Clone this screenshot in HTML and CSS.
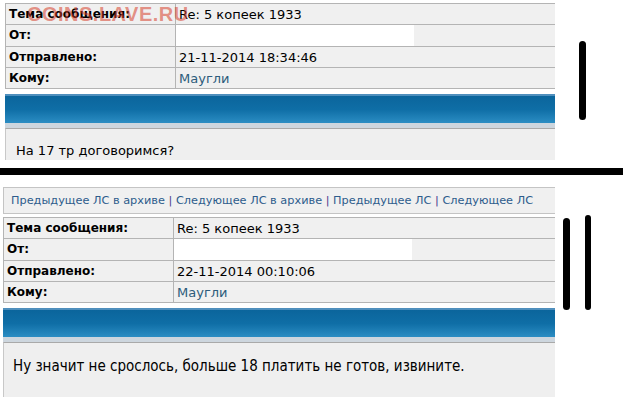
FILE: index.html
```html
<!DOCTYPE html>
<html lang="ru">
<head>
  <meta charset="UTF-8">
  <title>Личные сообщения</title>
  <link rel="stylesheet" href="styles.css">
</head>
<body>

  <div class="shot">

    <section class="pm pm-top">
      <table class="hdr">
        <tr><th>Тема сообщения:</th><td>Re: 5 копеек 1933</td></tr>
        <tr><th>От:</th><td class="hidden"><span class="blank"></span></td></tr>
        <tr><th>Отправлено:</th><td>21-11-2014 18:34:46</td></tr>
        <tr><th>Кому:</th><td><a href="#">Маугли</a></td></tr>
      </table>
      <div class="bar"></div>
      <div class="msg">На 17 тр договоримся?</div>
      <span class="wm">COINS.LAVE.RU</span>
    </section>

    <div class="divider"></div>

    <section class="pm pm-bottom">
      <div class="nav">
        <a href="#">Предыдущее ЛС в архиве</a> | <a href="#">Следующее ЛС в архиве</a> | <a href="#">Предыдущее ЛС</a> | <a href="#">Следующее ЛС</a>
      </div>
      <table class="hdr">
        <tr><th>Тема сообщения:</th><td>Re: 5 копеек 1933</td></tr>
        <tr><th>От:</th><td class="hidden"><span class="blank"></span></td></tr>
        <tr><th>Отправлено:</th><td>22-11-2014 00:10:06</td></tr>
        <tr><th>Кому:</th><td><a href="#">Маугли</a></td></tr>
      </table>
      <div class="bar"></div>
      <div class="msg msg-wide">Ну значит не срослось, больше 18 платить не готов, извините.</div>
    </section>

    <!-- пометки маркером -->
    <span class="mark mark-1"></span>
    <span class="mark mark-2a"></span>
    <span class="mark mark-2b"></span>
  </div>

</body>
</html>
```

FILE: styles.css
```css
body {
  margin: 0;
  background-color: #fff;
  font-family: "DejaVu Sans", Verdana, sans-serif;
  color: #000;
}

.shot {
  position: relative;
  width: 623px;
  height: 397px;
  overflow: hidden;
}

.pm {
  position: relative;
  width: 550px;
  background-color: #fff;
}

.pm-top {
  margin: 3px 0 0 5px;
  height: 157px;
  overflow: hidden;
}

.pm-bottom {
  margin: 12px 0 0 3px;
  width: 552px;
}

.hdr {
  width: 100%;
  border-collapse: collapse;
  background-color: #f0f0f0;
}

.hdr th,
.hdr td {
  height: 21px;
  box-sizing: border-box;
  padding: 0 3px;
  line-height: 19px;
  border: 1px solid #b4b4b4;
  border-right: none;
  text-align: left;
  white-space: nowrap;
  font-size: 13px;
}

.hdr th {
  width: 170px;
  font-size: 12px;
  font-weight: bold;
}

.hdr td.hidden {
  padding: 0;
}

.blank {
  display: block;
  width: 238px;
  height: 21px;
  background-color: #fff;
}

.hdr a {
  color: #2d5c7c;
  text-decoration: none;
}

.bar {
  height: 27px;
  margin-top: 5px;
  border-top: 2px solid #4f8fbd;
  background: linear-gradient(#0b659c, #0f6ea6 50%, #2b8dc3);
  border-bottom: 5px solid #cdd6de;
}

.msg {
  border-top: 1px solid #a9a9a9;
  border-left: 1px solid #c8c8c8;
  background-color: #efefef;
  padding: 14px 10px 0;
  height: 40px;
  font-size: 13px;
}

.pm-bottom .msg {
  height: 60px;
  padding: 14px 9px 0;
}

.msg-wide {
  font-family: "DejaVu Sans Condensed", "DejaVu Sans", sans-serif;
  font-stretch: condensed;
  font-size: 15px;
}

.wm {
  position: absolute;
  left: 22px;
  top: 0;
  font-family: "Liberation Sans", Arial, sans-serif;
  font-size: 20px;
  font-weight: bold;
  color: rgba(214, 60, 40, 0.55);
  letter-spacing: 0.5px;
}

.divider {
  height: 7px;
  margin-top: 8px;
  background-color: #000;
}

.nav {
  height: 25px;
  line-height: 25px;
  border: 1px solid #c4c4c4;
  border-right: none;
  background-color: #f0f0f0;
  padding-left: 7px;
  font-size: 11.3px;
  color: #4b3a8c;
  margin-top: 1px;
  margin-bottom: 3px;
}

.nav a {
  color: #2d5c8c;
  text-decoration: none;
}

.mark {
  position: absolute;
  width: 7px;
  background-color: #000;
  border-radius: 4px;
}

.mark-1 { left: 579px; top: 41px; height: 79px; }
.mark-2a { left: 563px; top: 218px; height: 92px; }
.mark-2b { left: 585px; top: 215px; height: 95px; width: 6px; }
```
